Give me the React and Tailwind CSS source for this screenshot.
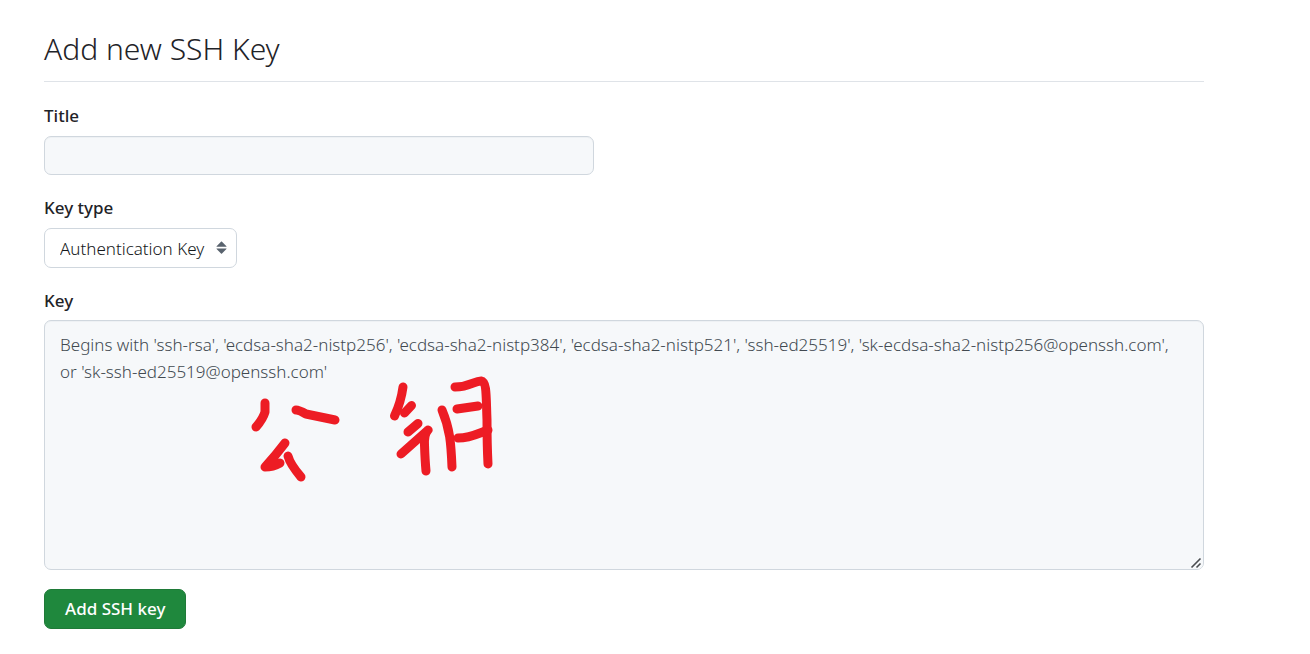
import React from "react";

const KEY_PLACEHOLDER =
  "Begins with 'ssh-rsa', 'ecdsa-sha2-nistp256', 'ecdsa-sha2-nistp384', 'ecdsa-sha2-nistp521', 'ssh-ed25519', 'sk-ecdsa-sha2-nistp256@openssh.com', or 'sk-ssh-ed25519@openssh.com'";

function Label({ htmlFor, children }) {
  return (
    <label htmlFor={htmlFor} className="block text-[17px] leading-6 font-medium">
      {children}
    </label>
  );
}

function HandwrittenNote() {
  return (
    <svg
      role="img"
      aria-label="公钥"
      viewBox="250 374 246 112"
      className="pointer-events-none absolute top-[54px] left-[206px] w-[246px] h-[112px]"
      fill="none"
      stroke="#ed1c24"
      strokeWidth="9"
      strokeLinecap="round"
      strokeLinejoin="round"
    >
      <path d="M265 403V412Q263 419 256 427" />
      <path d="M296 410Q299 410 306 414L335 420" />
      <path d="M285 443Q276 455 265 467Q273 467 280 463" />
      <path d="M288 456Q290 464 301 477" />
      <path d="M403 387Q401 402 394.500 416" />
      <path d="M404.500 413L411.500 405.500" />
      <path d="M408 432L418 423.500" />
      <path d="M401 454L428 430Q424 434 424.500 445Q425 460 426 471" />
      <path d="M442 410C450 429 451 443 452 467" />
      <path d="M455 387C470 387 474 381 481 381C487 382 486 396 487 420Q487 445 488 464" />
      <path d="M457 409L478 406" />
      <path d="M458 438C470 438 477 434 488 430" />
    </svg>
  );
}

function ResizeGrip() {
  return (
    <svg
      viewBox="0 0 14 14"
      aria-hidden="true"
      className="pointer-events-none absolute right-px bottom-px size-[14px] rounded-br-[6px] bg-[#f6f8fa]"
      fill="none"
      stroke="#4a4d50"
      strokeWidth="1.6"
    >
      <path d="M2.500 12.500L11.500 3.500M7.500 12.500L11.500 8.500" />
    </svg>
  );
}

export default function App() {
  return (
    <main className="pt-[31px] pb-6 pl-11 pr-[106px] bg-white text-[#1f2328] font-['Noto_Sans','Open_Sans',sans-serif]">
      <h1 className="pb-[14px] border-b border-[#dfe3e8] text-[30px] leading-9 font-light">
        Add new SSH Key
      </h1>
      <form className="pt-[22px]" onSubmit={(e) => e.preventDefault()}>
        <Label htmlFor="key-title">Title</Label>
        <input
          id="key-title"
          type="text"
          className="mt-2 block h-[39px] w-full max-w-[550px] rounded-[7px] border border-[#d0d7de] bg-[#f6f8fa] px-[15px] text-[17px] shadow-[inset_0_1px_0_rgba(208,215,222,0.2)]"
        />
        <div className="mt-[21px]">
          <Label htmlFor="key-type">Key type</Label>
          <div className="relative mt-2 inline-block align-top">
            <select
              id="key-type"
              className="block h-10 appearance-none rounded-[7px] border border-[#d0d7de] bg-white pl-[15px] pr-[31px] pt-[2px] text-[17px] font-light text-[#14171a]"
            >
              <option>Authentication Key</option>
            </select>
            <svg
              viewBox="0 0 16 16"
              aria-hidden="true"
              className="pointer-events-none absolute top-2 right-1 size-[22px] fill-[#59636e]"
            >
              <path d="m4.074 9.427 3.396 3.396a.25.25 0 0 0 .354 0l3.396-3.396A.25.25 0 0 0 11.043 9H4.251a.25.25 0 0 0-.177.427ZM4.074 7.47 7.47 4.073a.25.25 0 0 1 .354 0L11.22 7.47a.25.25 0 0 1-.177.426H4.251a.25.25 0 0 1-.177-.426Z" />
            </svg>
          </div>
        </div>
        <div className="mt-[21px]">
          <Label htmlFor="key-body">Key</Label>
          <div className="relative mt-[7px]">
            <textarea
              id="key-body"
              placeholder={KEY_PLACEHOLDER}
              className="block h-[250px] w-full resize-y rounded-[7px] border border-[#d0d7de] bg-[#f6f8fa] px-[15px] py-[10px] text-[17px] leading-[27px] font-light placeholder:text-[#414950] shadow-[inset_0_1px_0_rgba(208,215,222,0.2)]"
            />
            <HandwrittenNote />
            <ResizeGrip />
          </div>
        </div>
        <button
          type="submit"
          className="mt-[19px] h-10 rounded-[7px] border border-[#1f7a38] bg-[#1f883d] px-5 text-[17px] font-medium text-white"
        >
          Add SSH key
        </button>
      </form>
    </main>
  );
}
